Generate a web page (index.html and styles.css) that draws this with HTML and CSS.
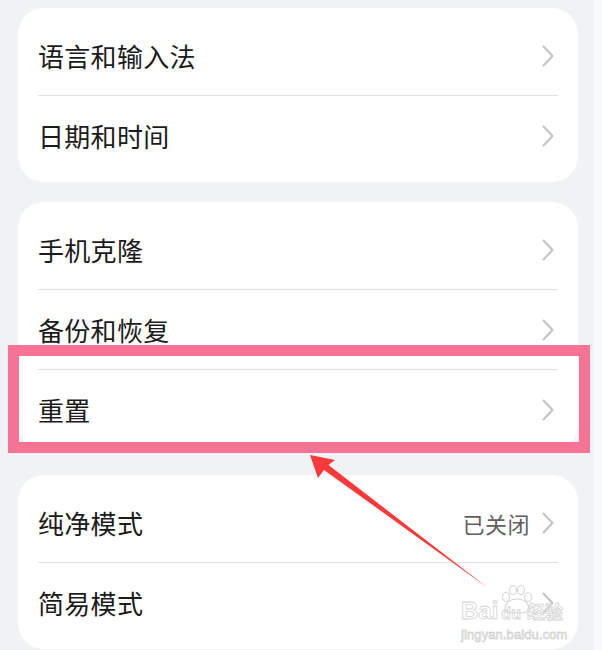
FILE: index.html
```html
<!DOCTYPE html>
<html lang="zh-CN">
<head>
<meta charset="utf-8">
<link rel="stylesheet" href="styles.css">
</head>
<body>
<div class="page">
  <div class="card">
    <div class="row"><span class="label">语言和输入法</span><span class="right"><svg class="chev" viewBox="0 0 12 22"><path d="M1.5 1.5 L10.5 11 L1.5 20.5"/></svg></span></div>
    <div class="divider"></div>
    <div class="row"><span class="label">日期和时间</span><span class="right"><svg class="chev" viewBox="0 0 12 22"><path d="M1.5 1.5 L10.5 11 L1.5 20.5"/></svg></span></div>
  </div>
  <div class="card card-compact">
    <div class="row"><span class="label">手机克隆</span><span class="right"><svg class="chev" viewBox="0 0 12 22"><path d="M1.5 1.5 L10.5 11 L1.5 20.5"/></svg></span></div>
    <div class="divider"></div>
    <div class="row"><span class="label">备份和恢复</span><span class="right"><svg class="chev" viewBox="0 0 12 22"><path d="M1.5 1.5 L10.5 11 L1.5 20.5"/></svg></span></div>
    <div class="divider"></div>
    <div class="row"><span class="label">重置</span><span class="right"><svg class="chev" viewBox="0 0 12 22"><path d="M1.5 1.5 L10.5 11 L1.5 20.5"/></svg></span></div>
  </div>
  <div class="card">
    <div class="row"><span class="label">纯净模式</span><span class="right"><span class="value">已关闭</span><svg class="chev" viewBox="0 0 12 22"><path d="M1.5 1.5 L10.5 11 L1.5 20.5"/></svg></span></div>
    <div class="divider"></div>
    <div class="row"><span class="label">简易模式</span><span class="right"><svg class="chev" viewBox="0 0 12 22"><path d="M1.5 1.5 L10.5 11 L1.5 20.5"/></svg></span></div>
  </div>
</div>
<div class="highlight"></div>
<svg class="arrow" viewBox="0 0 602 650" width="602" height="650">
  <polygon points="310,455 335,460 328.5,465 488,588 324,470 318,478" fill="#fa3a3a"/>
</svg>
<div class="watermark">
  <div class="wm-top"><span class="wm-bai">Bai</span><span class="wm-du">du</span><span class="wm-jy">经验</span></div>
  <div class="wm-url">jingyan.baidu.com</div>
  <svg class="wm-paw" viewBox="0 0 34 30"><g fill="none" stroke="#d6d6d6" stroke-width="1.2"><ellipse cx="6" cy="12" rx="3.5" ry="4.5"/><ellipse cx="13" cy="5" rx="3.5" ry="4.5"/><ellipse cx="21" cy="5" rx="3.5" ry="4.5"/><ellipse cx="28" cy="12" rx="3.5" ry="4.5"/><path d="M5 25 C5 16 12 14 17 14 C22 14 29 16 29 25 C29 29 5 29 5 25 Z"/></g></svg>
</div>
</body>
</html>
```
FILE: styles.css
```css
html {
  background: linear-gradient(to right, #f1f2f4 594px, #f8f9fa 594px);
}
body {
  margin: 0;
  font-family: "Noto Sans CJK SC", "Noto Sans", sans-serif;
  position: relative;
  width: 602px;
  height: 650px;
  overflow: hidden;
}
.page {
  padding: 8px 0 0 18px;
  display: flex;
  flex-direction: column;
  gap: 20px;
}
.card {
  width: 560px;
  background: #ffffff;
  border-radius: 26px;
  padding: 8px 0 7px;
  box-sizing: border-box;
}
.card-compact {
  padding-bottom: 2px;
  margin-bottom: 4px;
}
.row {
  height: 79px;
  display: flex;
  align-items: center;
  justify-content: space-between;
  padding: 0 24px 0 20px;
}
.label {
  font-size: 26px;
  color: #1b1b1b;
  letter-spacing: 0.3px;
}
.right {
  display: flex;
  align-items: center;
  gap: 12px;
}
.value {
  font-size: 22px;
  color: #5f5f5f;
  letter-spacing: 0.5px;
}
.chev {
  width: 12px;
  height: 22px;
  fill: none;
  stroke: #c3c3c3;
  stroke-width: 2;
  stroke-linecap: round;
  stroke-linejoin: round;
}
.divider {
  height: 1px;
  background: #e0e0e0;
  margin: 0 20px;
}
.highlight {
  position: absolute;
  left: 8px;
  top: 345px;
  width: 582px;
  height: 108px;
  border: 11px solid #f67396;
  box-sizing: border-box;
}
.arrow {
  position: absolute;
  left: 0;
  top: 0;
  pointer-events: none;
}
.watermark {
  position: absolute;
  left: 461px;
  top: 598px;
  width: 110px;
  font-family: "Liberation Sans", sans-serif;
  color: rgba(255, 255, 255, 0.5);
  -webkit-text-stroke: 0.8px #d4d4d4;
}
.wm-top {
  display: flex;
  align-items: baseline;
  font-size: 24px;
  line-height: 26px;
  font-weight: bold;
}
.wm-du {
  font-size: 16px;
  margin-left: 3px;
}
.wm-jy {
  font-family: "Noto Sans CJK SC", sans-serif;
  font-size: 18px;
  margin-left: 6px;
}
.wm-url {
  font-size: 13px;
  line-height: 16px;
  letter-spacing: 0.1px;
}
.wm-paw {
  position: absolute;
  left: 39px;
  top: -13px;
  width: 34px;
  height: 30px;
}
```
